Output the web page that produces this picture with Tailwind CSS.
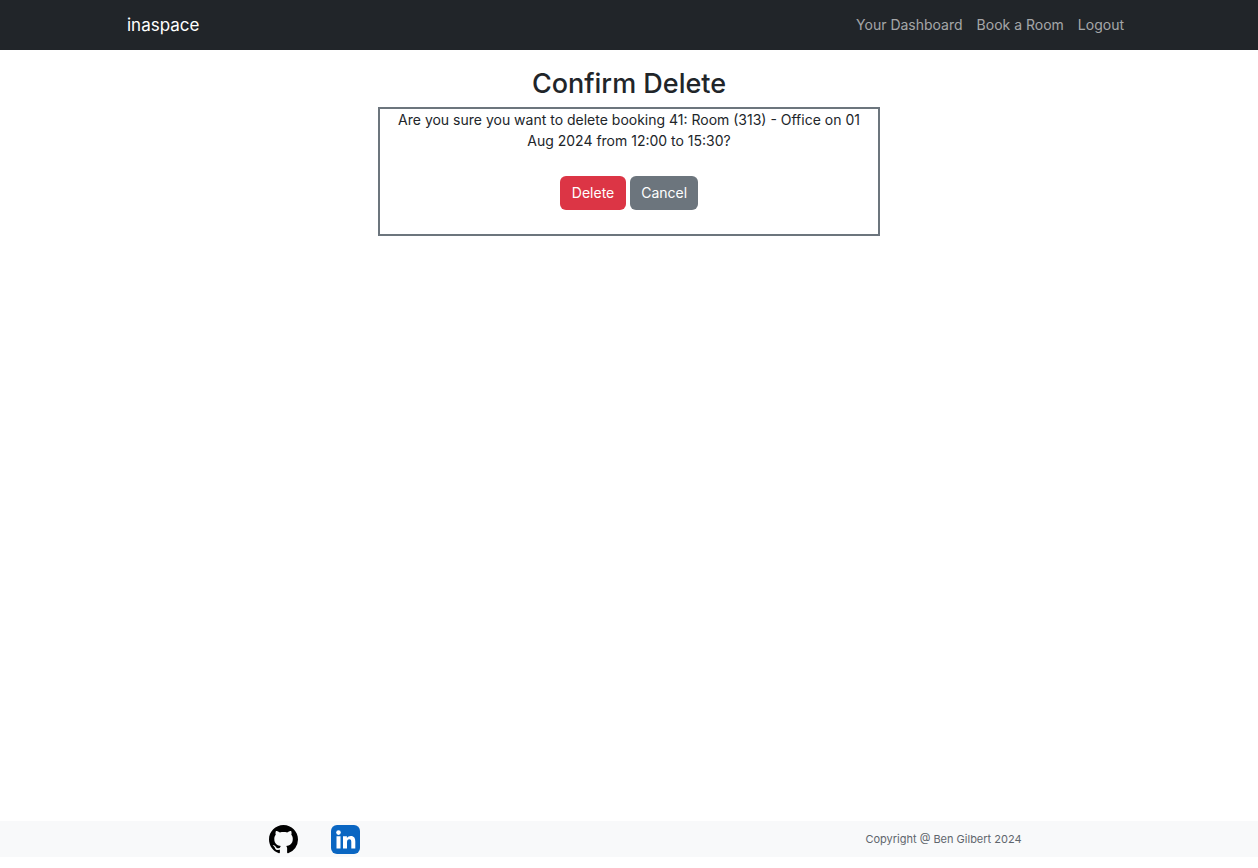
<!DOCTYPE html>
<html lang="en">
<head>
<meta charset="utf-8">
<title>Confirm Delete</title>
<script src="https://cdn.jsdelivr.net/npm/@tailwindcss/browser@4"></script>
</head>
<body class="flex min-h-screen flex-col bg-white pb-[11px] font-['Inter',sans-serif] text-sm text-[#212529]">
<header class="bg-[#212529]">
<nav class="mx-auto flex h-[50px] max-w-[1004px] items-center justify-between pr-[7px]">
<a href="#" class="text-[17px] leading-6 text-white">inaspace</a>
<div class="flex gap-3.5 text-white/60">
<a href="#">Your Dashboard</a>
<a href="#">Book a Room</a>
<a href="#">Logout</a>
</div>
</nav>
</header>
<main class="flex grow flex-col items-center px-4 pt-[17px]">
<h1 class="mb-[7px] text-[27px] leading-[33px] font-medium">Confirm Delete</h1>
<section class="w-full max-w-[502px] border-2 border-[#6c757d] px-3 pb-6 text-center">
<p class="mb-[25px] leading-[21px]">Are you sure you want to delete booking 41: Room (313) - Office on 01 Aug 2024 from 12:00 to 15:30?</p>
<div class="flex justify-center gap-1">
<button type="button" class="h-[34px] rounded-md bg-[#dc3545] px-3 text-white">Delete</button>
<button type="button" class="h-[34px] rounded-md bg-[#6c757d] px-[11px] text-white">Cancel</button>
</div>
</section>
</main>
<footer class="bg-[#f8f9fa]">
<div class="grid h-9 grid-cols-2 place-items-center">
<div class="flex gap-[33px]">
<a href="#" aria-label="GitHub"><svg class="size-[29px]" viewBox="0 0 16 16"><path d="M8 0C3.58 0 0 3.58 0 8c0 3.54 2.29 6.53 5.47 7.59.4.07.55-.17.55-.38 0-.19-.01-.82-.01-1.49-2.01.37-2.53-.49-2.69-.94-.09-.23-.48-.94-.82-1.13-.28-.15-.68-.52-.01-.53.63-.01 1.08.58 1.23.82.72 1.21 1.87.87 2.33.66.07-.52.28-.87.51-1.07-1.78-.2-3.64-.89-3.64-3.95 0-.87.31-1.59.82-2.15-.08-.2-.36-1.02.08-2.12 0 0 .67-.21 2.2.82.64-.18 1.32-.27 2-.27s1.36.09 2 .27c1.53-1.04 2.2-.82 2.2-.82.44 1.1.16 1.92.08 2.12.51.56.82 1.27.82 2.15 0 3.07-1.87 3.75-3.65 3.95.29.25.54.73.54 1.48 0 1.07-.01 1.93-.01 2.2 0 .21.15.46.55.38A8.01 8.01 0 0 0 16 8c0-4.42-3.58-8-8-8z"/></svg></a>
<a href="#" aria-label="LinkedIn"><svg class="size-[29px]" viewBox="0 0 29 29"><rect width="29" height="29" rx="6" fill="#0a66c2"/><g fill="#fff"><circle cx="7.5" cy="7.6" r="2.3"/><path d="M5.5 11.3h4v12.2h-4zM12 11.3h3.9v1.7c.8-1.3 2.1-2 3.9-2 3.5 0 4.5 2.3 4.5 5.6v6.9h-4v-6.2c0-1.7-.3-3-1.9-3s-2.4 1.2-2.4 3v6.2h-4z"/></g></svg></a>
</div>
<p class="pt-0.5 text-[11px] text-[#5f666d]">Copyright @ Ben Gilbert 2024</p>
</div>
</footer>
</body>
</html>
